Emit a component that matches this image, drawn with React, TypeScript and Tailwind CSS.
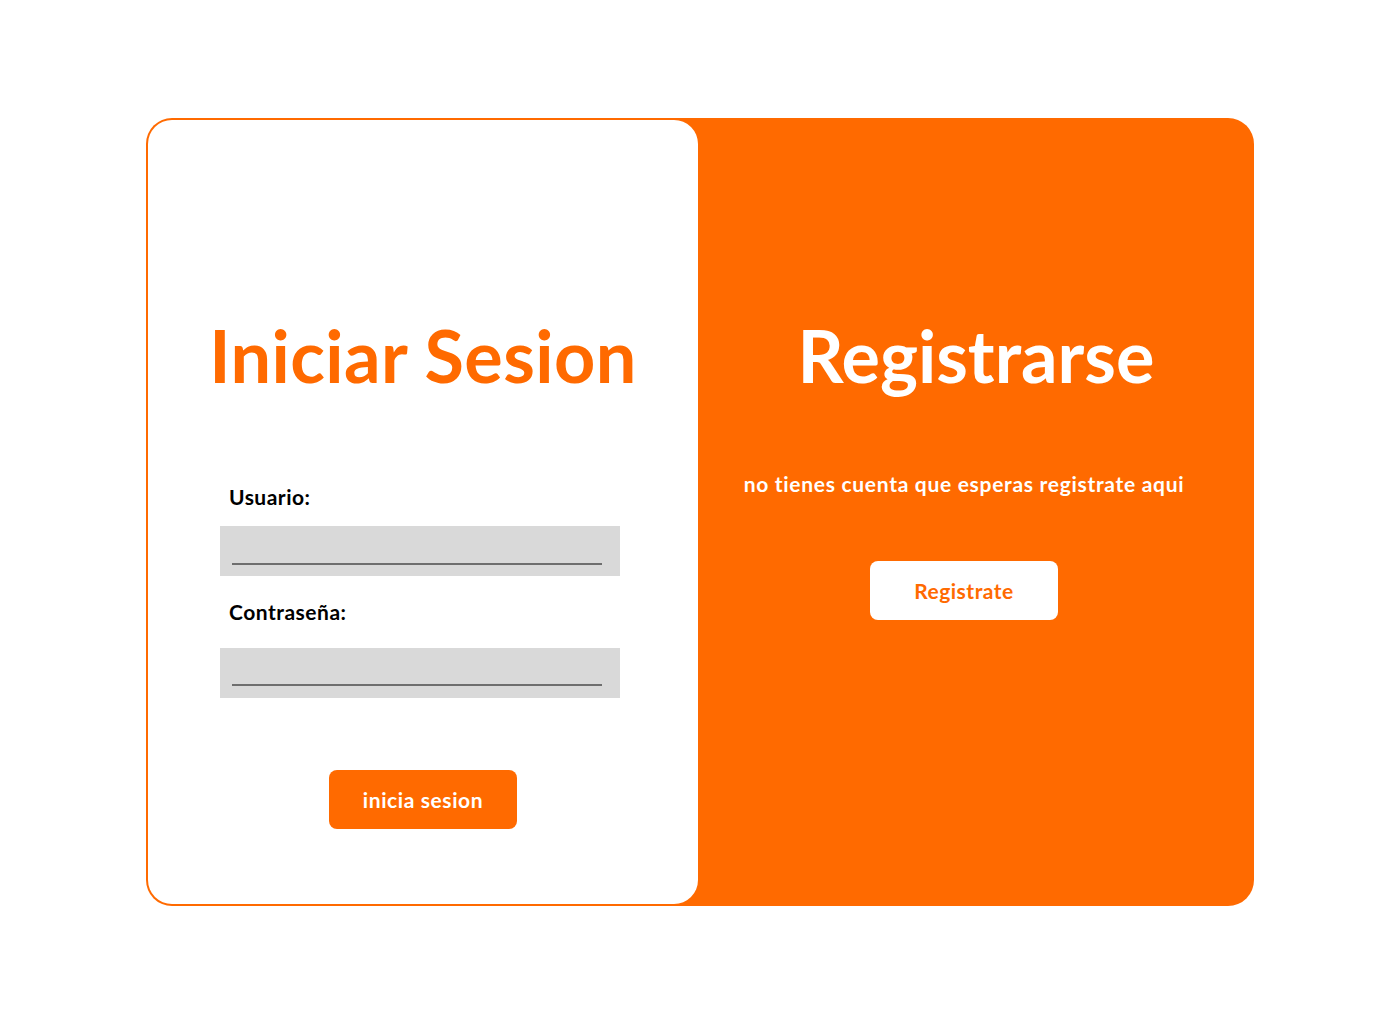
import React from "react";

export default function App() {
  const font = { fontFamily: "Lato, 'Noto Sans', sans-serif" };
  return (
    <div className="w-[1400px] h-[1024px] bg-white flex items-start justify-center pt-[118px] [font-variant-ligatures:none]" style={font}>
      <div className="w-[1108px] h-[788px] bg-[#ff6a00] rounded-[26px] flex p-[2px] pr-0">
        <div className="w-[550px] h-full bg-white rounded-[24px] flex flex-col">
          <h1 className="mt-[199px] text-center text-[72px] leading-none font-bold text-[#ff6a00] tracking-[0.4px]">
            Iniciar Sesion
          </h1>
          <div className="mt-[95px] pl-[72px] flex flex-col">
            <label className="pl-[9px] text-[21px] leading-none font-bold text-black tracking-[0.5px]">Usuario:</label>
            <div className="mt-[19px] w-[400px] h-[50px] bg-[#d9d9d9] pl-[12px] pr-[18px] flex items-end pb-[11px]">
              <div className="w-full h-[2px] bg-[#6e6e6e]" />
            </div>
            <label className="mt-[25px] pl-[9px] text-[21px] leading-none font-bold text-black tracking-[0.5px]">Contraseña:</label>
            <div className="mt-[26px] w-[400px] h-[50px] bg-[#d9d9d9] pl-[12px] pr-[18px] flex items-end pb-[12px]">
              <div className="w-full h-[2px] bg-[#6e6e6e]" />
            </div>
          </div>
          <div className="mt-[72px] flex justify-center">
            <button className="w-[188px] h-[59px] rounded-[8px] bg-[#ff6a00] text-white text-[21px] font-bold tracking-[0.6px]">
              inicia sesion
            </button>
          </div>
        </div>
        <div className="flex-1 flex flex-col items-center">
          <h1 className="mt-[199px] text-center text-[72px] leading-none font-bold text-white">
            Registrarse
          </h1>
          <p className="mt-[82px] pr-[24px] text-[21px] leading-none font-bold text-white tracking-[0.7px]">
            no tienes cuenta que esperas registrate aqui
          </p>
          <div className="mt-[67px] pr-[24px]">
            <button className="w-[188px] h-[59px] rounded-[8px] bg-white text-[#ff6a00] text-[21px] font-bold tracking-[0.5px]">
              Registrate
            </button>
          </div>
        </div>
      </div>
    </div>
  );
}
